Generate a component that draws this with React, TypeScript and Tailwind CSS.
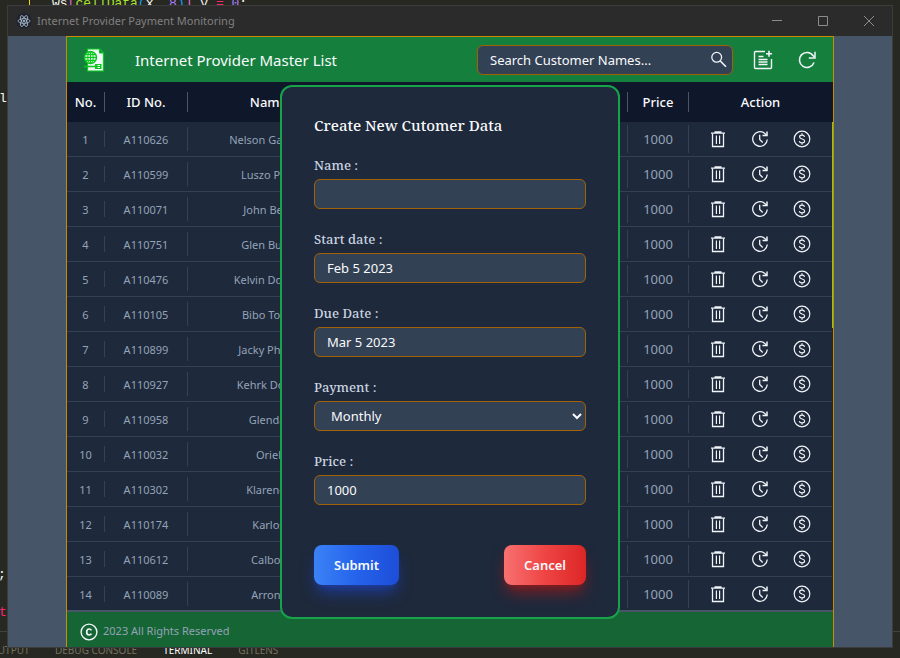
import React from "react";

const SANS = "font-['Segoe_UI','Noto_Sans',sans-serif]";

type Customer = { id: string; name: string };

const customers: Customer[] = [
  { id: "A110626", name: "Nelson Garcian" },
  { id: "A110599", name: "Luszo Pitts" },
  { id: "A110071", name: "John Bells" },
  { id: "A110751", name: "Glen Buick" },
  { id: "A110476", name: "Kelvin Dolans" },
  { id: "A110105", name: "Bibo Tolits" },
  { id: "A110899", name: "Jacky Phillip" },
  { id: "A110927", name: "Kehrk Dolan" },
  { id: "A110958", name: "Glendal" },
  { id: "A110032", name: "Oriel" },
  { id: "A110302", name: "Klarence" },
  { id: "A110174", name: "Karlos" },
  { id: "A110612", name: "Calboy" },
  { id: "A110089", name: "Arrons" },
];

function ElectronIcon() {
  return (
    <svg viewBox="0 0 24 24" className="size-4" fill="none" stroke="#9fb4c4" strokeWidth="1.3">
      <circle cx="12" cy="12" r="11.5" fill="#20222e" stroke="none" />
      <ellipse cx="12" cy="12" rx="9" ry="3.6" />
      <ellipse cx="12" cy="12" rx="9" ry="3.6" transform="rotate(60 12 12)" />
      <ellipse cx="12" cy="12" rx="9" ry="3.6" transform="rotate(120 12 12)" />
      <circle cx="12" cy="12" r="1.4" fill="#9fb4c4" />
    </svg>
  );
}

function LogoIcon() {
  return (
    <svg viewBox="0 0 24 26" className="h-[26px] w-6" fill="none">
      <path d="M4.5 2H16.5l4 4V24H4.5Z" fill="#f1f5f9" stroke="#0ac81e" strokeWidth="1.2" />
      <path d="M16.5 2v4h4Z" fill="#15803d" stroke="#0ac81e" strokeWidth="1" />
      <circle cx="7.500" cy="10.500" r="6" fill="#bff0c8" stroke="#0ac81e" strokeWidth="1.400" />
      <ellipse cx="7.500" cy="10.500" rx="2.700" ry="6" stroke="#0ac81e" strokeWidth="1" />
      <path d="M1.500 10.500h12M2.500 7.500h10M2.500 13.500h10M7.500 4.500v12" stroke="#0ac81e" strokeWidth="1" />
      <path d="M1 19.500h11" stroke="#0ac81e" strokeWidth="1.600" />
      <rect x="12" y="17" width="6.500" height="5" fill="#0ac81e" />
      <path d="M14.500 18.500h2.500M14.500 20.500h2.500" stroke="#f1f5f9" strokeWidth="1" />
    </svg>
  );
}

function SearchIcon() {
  return (
    <svg viewBox="0 0 18 18" className="size-[18px]" fill="none" stroke="#f1f5f9" strokeWidth="1.3">
      <circle cx="6.700" cy="6.300" r="4.900" />
      <path d="M10.300 10 16 15.700" strokeWidth="1.600" />
    </svg>
  );
}

function AddListIcon() {
  return (
    <svg viewBox="0 0 20 20" className="size-5" fill="none" stroke="#f1f5f9" strokeWidth="1.400">
      <path d="M12 1.500H2.500a1 1 0 0 0-1 1v15a1 1 0 0 0 1 1h15a1 1 0 0 0 1-1V9" />
      <path d="M16 .8v6M13 3.800h6" strokeWidth="1.600" />
      <path d="M5.500 6.500h5M5.500 9.500h9M5.500 12h9M5.500 14.500h9" strokeWidth="1.300" />
    </svg>
  );
}

function RefreshIcon() {
  return (
    <svg viewBox="0 0 20 20" className="size-5" fill="none" stroke="#f1f5f9" strokeWidth="1.600">
      <path d="M17 12.500A7.500 7.500 0 1 1 16 5.500L17.500 7" />
      <path d="M18 1.800V8h-6.200" strokeWidth="1.500" />
    </svg>
  );
}

function TrashIcon() {
  return (
    <svg viewBox="0 0 18 18" className="size-[18px]" fill="none" stroke="#f1f5f9" strokeWidth="1.300">
      <path d="M2 3.200h14M5.500 1.900h7" />
      <path d="M3.500 3.500v13h11v-13" />
      <path d="M7.400 5.500v8.500M10.600 5.500v8.500" strokeWidth="1.200" />
    </svg>
  );
}

function RenewIcon() {
  return (
    <svg viewBox="0 0 18 18" className="size-[18px]" fill="none" stroke="#f1f5f9" strokeWidth="1.300">
      <path d="M16.300 9.500A7.300 7.300 0 1 1 13.500 3.200L15.500 5" />
      <path d="M16 1.500V5.500h-4.500" strokeWidth="1.500" />
      <path d="M8.700 4.800V9.500l3 3" />
    </svg>
  );
}

function DollarIcon() {
  return (
    <svg viewBox="0 0 18 18" className="size-[18px]" fill="none" stroke="#f1f5f9" strokeWidth="1.200">
      <circle cx="9" cy="9" r="7.800" />
      <path d="M11.500 6.800C11.300 5.700 10.300 5.200 9 5.200c-1.400 0-2.400.7-2.400 1.800 0 2.700 5 1.300 5 4 0 1.200-1.100 1.900-2.600 1.900-1.400 0-2.500-.6-2.700-1.800M9 3.300v1.900M9 12.900v1.900" />
    </svg>
  );
}

function CopyrightIcon() {
  return (
    <svg viewBox="0 0 18 18" className="size-[18px]" fill="none" stroke="#f1f5f9">
      <circle cx="9" cy="9" r="7.900" strokeWidth="1.400" />
      <path d="M11.400 7.300C11 6.500 10.200 6 9.200 6 7.600 6 6.700 7.200 6.700 9s.9 3 2.500 3c1 0 1.800-.5 2.200-1.300" strokeWidth="1.700" />
    </svg>
  );
}

function HeadCell({ label, divider = true }: { label: string; divider?: boolean }) {
  return (
    <th scope="col" className="p-0 font-medium">
      <div className="flex h-10 items-center">
        <span className="flex-1 pt-0.5 text-center">{label}</span>
        {divider && <span className="h-5 w-px bg-[#475569]" />}
      </div>
    </th>
  );
}

function Cell({ line, children }: { line: string; children?: React.ReactNode }) {
  return (
    <td className="p-0">
      <div className="flex h-[34px] items-center">
        <span className="flex-1 pt-0.5 text-center">{children}</span>
        <span className={`w-px bg-[#334155] ${line}`} />
      </div>
    </td>
  );
}

function CustomerTable() {
  return (
    <div className="flex min-h-0 flex-1 overflow-hidden bg-[#1e293b]">
      <table className="w-full table-fixed self-start border-collapse">
        <colgroup>
          <col className="w-[38px]" />
          <col className="w-[83px]" />
          <col className="w-[162px]" />
          <col />
          <col className="w-[61px]" />
          <col className="w-[143px]" />
        </colgroup>
        <thead className="bg-[#0f172a] text-[13px] text-[#f8fafc]">
          <tr>
            <HeadCell label="No." />
            <HeadCell label="ID No." />
            <HeadCell label="Name" />
            <HeadCell label="" />
            <HeadCell label="Price" />
            <HeadCell label="Action" divider={false} />
          </tr>
        </thead>
        <tbody className="text-[11px] text-[#94a3b8]">
          {customers.map((c, i) => (
            <tr key={c.id} className="border-b border-[#334155]">
              <Cell line="h-4">{i + 1}</Cell>
              <Cell line="h-6">{c.id}</Cell>
              <Cell line="h-7">{c.name}</Cell>
              <Cell line="h-7" />
              <Cell line="h-7">
                <span className="text-[13px]">1000</span>
              </Cell>
              <td className="p-0 pr-0.5">
                <div className="flex items-center justify-center gap-6">
                  <button type="button" aria-label="Delete"><TrashIcon /></button>
                  <button type="button" aria-label="Renew"><RenewIcon /></button>
                  <button type="button" aria-label="Pay"><DollarIcon /></button>
                </div>
              </td>
            </tr>
          ))}
        </tbody>
      </table>
      <div className="flex w-px shrink-0 flex-col">
        <div className="h-10 bg-[#0f172a]" />
        <div className="h-[206px] bg-[#84cc16]" />
      </div>
    </div>
  );
}

const control =
  "mt-0.5 h-[30px] w-full rounded-md border border-[#a16207] bg-[#334155] px-3 text-[13px] text-[#f8fafc] outline-none";
const label = "block text-[13px] font-medium leading-6 text-[#cbd5e1]";

function TextField({ id, text, value }: { id: string; text: string; value: string }) {
  return (
    <div>
      <label htmlFor={id} className={label}>{text}</label>
      <input id={id} type="text" defaultValue={value} className={`${control} ${SANS}`} />
    </div>
  );
}

function CreateDialog() {
  return (
    <form
      aria-labelledby="dialog-title"
      onSubmit={(e) => e.preventDefault()}
      className="absolute top-12 left-1/2 w-[340px] -translate-x-1/2 rounded-xl border-2 border-[#16a34a] bg-[#1e293b] px-8 pt-[26px] pb-8 font-['Noto_Serif','DejaVu_Serif_Condensed','DejaVu_Serif',serif]"
    >
      <h2 id="dialog-title" className="mb-4 text-[15px] font-medium leading-6 text-[#f8fafc]">
        Create New Cutomer Data
      </h2>
      <div className="flex flex-col gap-[18px]">
        <TextField id="name" text="Name :" value="" />
        <TextField id="start" text="Start date :" value="Feb 5 2023" />
        <TextField id="due" text="Due Date :" value="Mar 5 2023" />
        <div>
          <label htmlFor="payment" className={label}>Payment :</label>
          <select id="payment" className={`${control} ${SANS}`}>
            <option>Monthly</option>
            <option>Yearly</option>
          </select>
        </div>
        <TextField id="price" text="Price :" value="1000" />
      </div>
      <div className={`mt-10 flex justify-between text-[13px] font-semibold text-[#f8fafc] ${SANS}`}>
        <button
          type="submit"
          className="h-10 w-[85px] rounded-lg bg-linear-to-r/srgb from-[#3b82f6] via-[#2563eb] to-[#1d4ed8] pt-0.5 shadow-lg shadow-[#1e40af]/80"
        >
          Submit
        </button>
        <button
          type="button"
          className="h-10 w-[82px] rounded-lg bg-linear-to-r/srgb from-[#f87171] via-[#ef4444] to-[#dc2626] pt-0.5 shadow-lg shadow-[#991b1b]/80"
        >
          Cancel
        </button>
      </div>
    </form>
  );
}

function TitleBar() {
  return (
    <div className="flex h-[30px] items-center bg-[#2b2b2b] pl-2 text-[11px] text-[#808080]">
      <ElectronIcon />
      <span className="ml-[5px] flex-1">Internet Provider Payment Monitoring</span>
      <button type="button" aria-label="Minimize" className="flex w-[46px] justify-center">
        <svg viewBox="0 0 10 10" className="size-2.5" stroke="#8c8c8c"><path d="M0 4.500h10" /></svg>
      </button>
      <button type="button" aria-label="Maximize" className="flex w-[46px] justify-center">
        <svg viewBox="0 0 10 10" className="size-2.5" stroke="#8c8c8c" fill="none"><path d="M.5.5h9v9h-9z" /></svg>
      </button>
      <button type="button" aria-label="Close" className="flex w-[46px] justify-center">
        <svg viewBox="0 0 10 10" className="size-2.5" stroke="#8c8c8c"><path d="m0 0 10 10M10 0 0 10" /></svg>
      </button>
    </div>
  );
}

function AppWindow() {
  return (
    <div className={`absolute inset-x-[7px] top-[5px] bottom-2.5 flex flex-col border border-[#3c3c3c] ${SANS}`}>
      <TitleBar />
      <div className="min-h-0 flex-1 bg-[#475569] px-[58px]">
        <main className="relative flex h-full flex-col border border-b-0 border-[#ca8a04]">
          <header className="flex h-[45px] shrink-0 items-center bg-[#15803d] px-4">
            <LogoIcon />
            <h1 className="ml-7 flex-1 pt-0.5 text-[15px] text-[#f8fafc]">Internet Provider Master List</h1>
            <div className="flex h-[30px] w-64 items-center rounded-md border border-[#a16207] bg-[#334155] pr-1 pl-3">
              <input
                type="search"
                aria-label="Search Customer Names"
                placeholder="Search Customer Names..."
                className="min-w-0 flex-1 bg-transparent pt-0.5 text-[13px] text-[#f8fafc] outline-none placeholder:text-[#f8fafc]"
              />
              <button type="button" aria-label="Search"><SearchIcon /></button>
            </div>
            <button type="button" aria-label="Add customer" className="ml-5"><AddListIcon /></button>
            <button type="button" aria-label="Refresh" className="ml-6"><RefreshIcon /></button>
          </header>
          <CustomerTable />
          <footer className="flex h-[37px] shrink-0 items-center border-t-2 border-[#475569] bg-[#166534] pt-1 pl-[13px] text-[11px] text-[#94a3b8]">
            <CopyrightIcon />
            <span className="ml-[5px]">2023 All Rights Reserved</span>
          </footer>
          <CreateDialog />
        </main>
      </div>
    </div>
  );
}

function EditorBackdrop() {
  return (
    <div className="absolute inset-0 flex flex-col font-['Liberation_Mono',monospace] text-[13px] leading-5 text-[#f8f8f2]">
      <div className="relative flex-1 overflow-hidden">
        <span className="absolute top-0 left-[29px] h-5 w-px bg-[#ffd700]" />
        <code className="absolute -top-1.5 left-[52px] whitespace-pre">
          ws<span className="text-[#da70d6]">[</span>
          <span className="text-[#a6e22e]">cellData</span>
          <span className="text-[#179fff]">(</span>x, <span className="text-[#ae81ff]">8</span>
          <span className="text-[#179fff]">)</span>
          <span className="text-[#da70d6]">]</span> y <span className="text-[#f92672]">=</span>{" "}
          <span className="text-[#ae81ff]">0</span>;
        </code>
        <code className="absolute top-[89px] -left-px">l</code>
        <code className="absolute top-[565px] -left-0.5">;</code>
        <code className="absolute top-[603px] -left-px text-[#f92672]">t</code>
      </div>
      <div className="flex h-[27px] gap-[26px] border-t border-[#414339] pt-2 font-['Segoe_UI','Noto_Sans',sans-serif] text-[10px] text-[#75715e]">
        <span className="-ml-2.5 w-[39px]">OUTPUT</span>
        <span>DEBUG CONSOLE</span>
        <span className="text-white">TERMINAL</span>
        <span>GITLENS</span>
      </div>
    </div>
  );
}

export default function App() {
  return (
    <div className="relative h-screen overflow-hidden bg-[#272822]">
      <EditorBackdrop />
      <AppWindow />
    </div>
  );
}
